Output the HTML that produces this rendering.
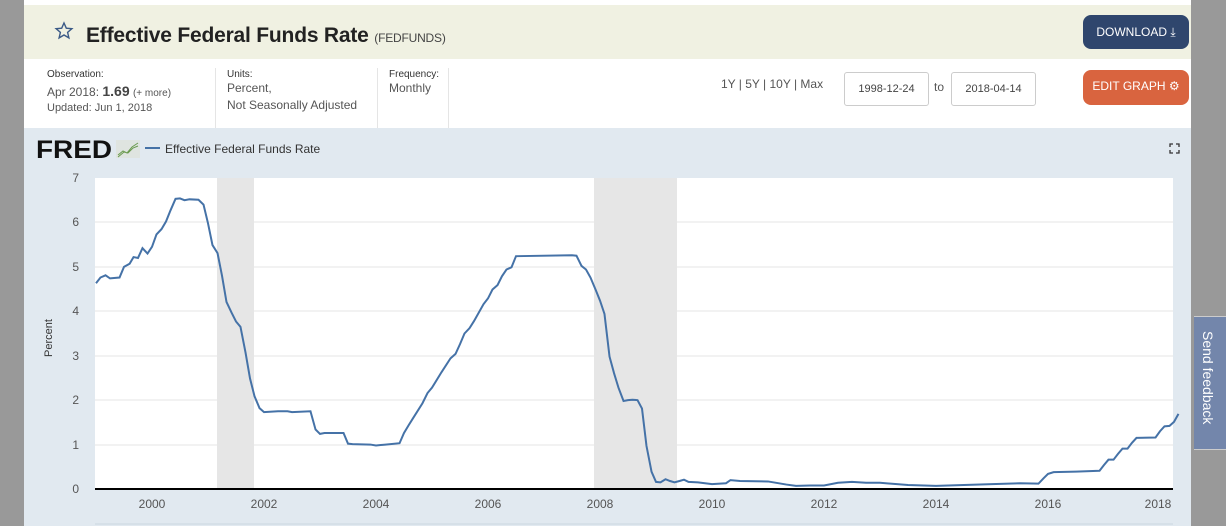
<!DOCTYPE html>
<html><head><meta charset="utf-8">
<style>
*{margin:0;padding:0;box-sizing:border-box}
body{width:1226px;height:526px;overflow:hidden;background:#999;font-family:"Liberation Sans",sans-serif;position:relative}
.main{position:absolute;left:24px;top:0;width:1167px;height:526px;background:#fff}
.hdr{position:absolute;left:0;top:5px;width:1167px;height:54px;background:#f0f1e2}
.title{position:absolute;left:62px;top:19px;font-size:21px;font-weight:bold;color:#222;letter-spacing:-0.2px}
.title small{font-size:12px;font-weight:normal;color:#444}
.btn{position:absolute;border-radius:8px;color:#fff;font-size:12px;text-align:center}
.lbl{position:absolute;font-size:10px;color:#333}
.val{position:absolute;font-size:12px;color:#555;line-height:17px}
.sep{position:absolute;top:68px;width:1px;height:60px;background:#e5e5e5}
.inp{position:absolute;top:72px;width:85px;height:34px;border:1px solid #ccc;border-radius:3px;font-size:11px;color:#444;text-align:center;line-height:32px}
.chart{position:absolute;left:0;top:128px;width:1167px;height:398px;background:#e1e9f0}
.fb{position:absolute;left:1194px;top:316px;width:32px;height:134px;background:#7386ab;border-top:1px solid #ccc;border-bottom:1px solid #ccc}
.fb span{position:absolute;left:6px;top:14px;writing-mode:vertical-rl;color:#fff;font-size:14px}
</style></head><body>
<div class="main">
<div class="hdr">
<svg style="position:absolute;left:30px;top:16px" width="20" height="20" viewBox="0 0 20 20"><path d="M10 2l2.3 5.2 5.6.5-4.3 3.7 1.3 5.5L10 14l-4.9 2.9 1.3-5.5L2.1 7.7l5.6-.5z" fill="none" stroke="#3b5a86" stroke-width="1.4"/></svg>
<div class="title">Effective Federal Funds Rate <small>(FEDFUNDS)</small></div>
<div class="btn" style="left:1059px;top:10px;width:106px;height:34px;background:#2f466d;line-height:34px">DOWNLOAD &#10515;</div>
</div>
<div class="lbl" style="left:23px;top:69px">Observation:</div>
<div class="val" style="left:23px;top:83px">Apr 2018: <b style="font-size:14px;color:#444">1.69</b> <span style="font-size:10px">(+ more)</span></div>
<div class="val" style="left:23px;top:100px;font-size:11px">Updated: Jun 1, 2018</div>
<div class="sep" style="left:191px"></div>
<div class="lbl" style="left:203px;top:69px">Units:</div>
<div class="val" style="left:203px;top:80px">Percent,<br>Not Seasonally Adjusted</div>
<div class="sep" style="left:353px"></div>
<div class="lbl" style="left:365px;top:69px">Frequency:</div>
<div class="val" style="left:365px;top:80px">Monthly</div>
<div class="sep" style="left:424px"></div>
<div class="val" style="left:697px;top:76px">1Y | 5Y | 10Y | Max</div>
<div class="inp" style="left:820px">1998-12-24</div>
<div class="val" style="left:910px;top:79px">to</div>
<div class="inp" style="left:927px">2018-04-14</div>
<div class="btn" style="left:1059px;top:70px;width:106px;height:35px;background:#d9643f;line-height:33px">EDIT GRAPH &#9881;</div>
<div class="chart"></div>
</div>
<svg style="position:absolute;left:0;top:0" width="1226" height="526">
<text x="36" y="158" font-family="Liberation Sans" font-weight="bold" font-size="25" fill="#111" textLength="76" lengthAdjust="spacingAndGlyphs">FRED</text>
<rect x="116" y="140" width="24" height="18" fill="#dfe4e0"/>
<path d="M118 155l5-4 4 2 5-6 6-4M118 157l6-5 4 1 5-5 5-2" fill="none" stroke="#6a9a4f" stroke-width="1"/>
<line x1="145" y1="148" x2="160" y2="148" stroke="#4572a7" stroke-width="2"/>
<text x="165" y="153" font-family="Liberation Sans" font-size="12" fill="#333">Effective Federal Funds Rate</text>
<path d="M1170 147v-3h3M1176 144h3v3M1179 150v3h-3M1173 153h-3v-3" fill="none" stroke="#333" stroke-width="1.3"/>
<rect x="95" y="178" width="1078" height="311" fill="#fff"/>
<rect x="217" y="178" width="37" height="311" fill="#e6e6e6"/>
<rect x="594" y="178" width="83" height="311" fill="#e6e6e6"/>
<g stroke="#e6e6e6" stroke-width="1">
<line x1="95" x2="1173" y1="445" y2="445"/><line x1="95" x2="1173" y1="400" y2="400"/><line x1="95" x2="1173" y1="356" y2="356"/><line x1="95" x2="1173" y1="311" y2="311"/><line x1="95" x2="1173" y1="267" y2="267"/><line x1="95" x2="1173" y1="222" y2="222"/>
</g>
<line x1="95" x2="1173" y1="489" y2="489" stroke="#000" stroke-width="2"/>
<line x1="95" x2="1173" y1="524" y2="524" stroke="#ccd6e0" stroke-width="1"/>
<g font-family="Liberation Sans" font-size="12" fill="#555" text-anchor="end">
<text x="79" y="493">0</text><text x="79" y="449">1</text><text x="79" y="404">2</text><text x="79" y="360">3</text><text x="79" y="315">4</text><text x="79" y="271">5</text><text x="79" y="226">6</text><text x="79" y="182">7</text>
</g>
<text transform="translate(52,357) rotate(-90)" font-family="Liberation Sans" font-size="11" fill="#333">Percent</text>
<g font-family="Liberation Sans" font-size="12" fill="#555" text-anchor="middle">
<text x="152" y="508">2000</text><text x="264" y="508">2002</text><text x="376" y="508">2004</text><text x="488" y="508">2006</text><text x="600" y="508">2008</text><text x="712" y="508">2010</text><text x="824" y="508">2012</text><text x="936" y="508">2014</text><text x="1048" y="508">2016</text><text x="1158" y="508">2018</text>
</g>
<g transform="matrix(56 0 0 -44.43 -111848 489)">
<polyline vector-effect="non-scaling-stroke" fill="none" stroke="#4572a7" stroke-width="2" points="1999,4.63 1999.08,4.76 1999.17,4.81 1999.25,4.74 1999.42,4.76 1999.5,5.0 1999.6,5.07 1999.67,5.22 1999.75,5.2 1999.83,5.42 1999.92,5.3 2000,5.45 2000.08,5.73 2000.17,5.85 2000.25,6.02 2000.33,6.27 2000.42,6.53 2000.5,6.54 2000.58,6.5 2000.67,6.52 2000.83,6.51 2000.92,6.4 2001,5.98 2001.08,5.49 2001.17,5.31 2001.25,4.8 2001.33,4.21 2001.42,3.97 2001.5,3.77 2001.58,3.65 2001.67,3.07 2001.75,2.49 2001.83,2.09 2001.92,1.82 2002,1.73 2002.25,1.75 2002.42,1.75 2002.5,1.73 2002.83,1.75 2002.92,1.34 2003,1.24 2003.08,1.26 2003.42,1.26 2003.5,1.02 2003.58,1.01 2003.9,1.0 2004,0.98 2004.17,1.0 2004.42,1.03 2004.5,1.26 2004.58,1.43 2004.67,1.61 2004.83,1.93 2004.92,2.16 2005,2.28 2005.17,2.63 2005.33,2.94 2005.42,3.04 2005.5,3.26 2005.58,3.5 2005.67,3.62 2005.75,3.78 2005.92,4.16 2006,4.29 2006.08,4.49 2006.17,4.59 2006.25,4.79 2006.33,4.94 2006.42,4.99 2006.5,5.24 2007.5,5.26 2007.58,5.25 2007.67,5.02 2007.75,4.94 2007.83,4.76 2007.92,4.49 2008,4.24 2008.08,3.94 2008.17,2.98 2008.25,2.61 2008.33,2.28 2008.42,1.98 2008.5,2.0 2008.58,2.01 2008.67,2.0 2008.75,1.81 2008.83,0.97 2008.92,0.39 2009,0.16 2009.08,0.15 2009.17,0.22 2009.25,0.18 2009.33,0.15 2009.42,0.18 2009.5,0.21 2009.58,0.16 2009.75,0.15 2010,0.11 2010.25,0.13 2010.33,0.2 2010.5,0.18 2011,0.17 2011.33,0.1 2011.5,0.07 2011.75,0.08 2012,0.08 2012.25,0.14 2012.5,0.16 2012.75,0.14 2013,0.14 2013.5,0.09 2014,0.07 2014.5,0.09 2015,0.11 2015.5,0.13 2015.83,0.12 2015.92,0.24 2016,0.34 2016.1,0.38 2016.5,0.39 2016.92,0.41 2017,0.54 2017.08,0.66 2017.17,0.66 2017.25,0.79 2017.33,0.91 2017.42,0.91 2017.5,1.04 2017.58,1.15 2017.92,1.16 2018,1.3 2018.08,1.41 2018.17,1.42 2018.25,1.51 2018.33,1.69"/>
</g>
</svg>
<div class="fb"><span>Send feedback</span></div>
</body></html>
